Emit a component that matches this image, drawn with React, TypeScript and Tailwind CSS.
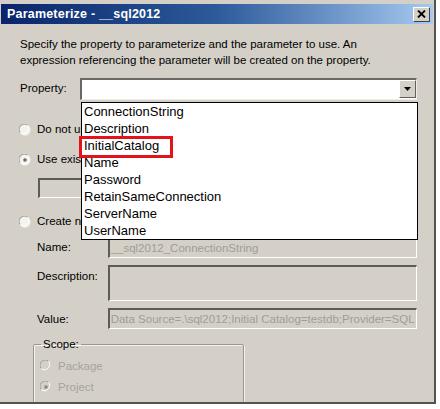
import React from 'react'

const font = { fontFamily: '"Liberation Sans", Arial, sans-serif' }

function Radio({ checked, disabled }: { checked?: boolean; disabled?: boolean }) {
  return (
    <svg width="12" height="12" viewBox="0 0 12 12" className="shrink-0">
      <circle cx="6" cy="6" r="5.5" fill={disabled ? '#d4d0c8' : '#f4f3ef'} />
      <path d="M1.2 8.5 A5.2 5.2 0 0 1 8.5 1.2" fill="none" stroke="#9a9790" strokeWidth="1" />
      <path d="M8.5 1.2 A5.2 5.2 0 0 1 1.2 8.5" fill="none" stroke="#ffffff" strokeWidth="1" />
      {checked && <circle cx="6" cy="6" r="1.8" fill={disabled ? '#8a8780' : '#6a6a6a'} />}
    </svg>
  )
}

function Field({ children, className }: { children?: React.ReactNode; className: string }) {
  return (
    <div
      className={`border-t-2 border-l-2 border-t-[#5e5c58] border-l-[#5e5c58] border-r border-b border-r-white border-b-white bg-[#d4d0c8] overflow-hidden whitespace-nowrap text-[11.5px] text-[#a09d96] pl-[1px] ${className}`}
    >
      {children}
    </div>
  )
}

// radio rows sit under the open list; their labels are clipped at its edge
function RadioRow({ label, checked, className }: { label: string; checked?: boolean; className: string }) {
  return (
    <div className={`flex items-center gap-[6px] h-[16px] -ml-[1px] text-[11.5px] ${className}`}>
      <Radio checked={checked} />
      <span className="w-[44px] overflow-hidden whitespace-nowrap">{label}</span>
    </div>
  )
}

const items = [
  'ConnectionString',
  'Description',
  'InitialCatalog',
  'Name',
  'Password',
  'RetainSameConnection',
  'ServerName',
  'UserName',
]

export default function App() {
  return (
    <div className="w-[440px] h-[409px] bg-white relative overflow-hidden" style={font}>
      {/* dialog window */}
      <div className="w-[436px] h-[404px] bg-[#d4d0c8] border-r-2 border-b-2 border-r-[#55534f] border-b-[#55534f] pt-[4px] pl-[1px] pr-[1px] flex flex-col overflow-hidden">
        {/* title bar */}
        <div className="h-[20px] bg-gradient-to-r from-[#0a246a] via-[#2d5a9a] to-[#a6caf0] flex items-center justify-between pl-[6px] pr-[3px] shrink-0">
          <span className="text-white font-bold text-[12.5px] tracking-[0.2px]">Parameterize - __sql2012</span>
          <div className="w-[17px] h-[15px] bg-[#d4d0c8] border-t border-l border-t-white border-l-white border-r border-b border-r-[#404040] border-b-[#404040] flex items-center justify-center">
            <svg width="9" height="8" viewBox="0 0 9 8">
              <path d="M1 0.5 L8 7.5 M8 0.5 L1 7.5" stroke="#000" strokeWidth="1.8" />
            </svg>
          </div>
        </div>

        {/* body */}
        <div className="pl-[19px] pr-[16px] flex flex-col text-black">
          <p className="mt-[12px] text-[11.5px] leading-[16px]">
            Specify the property to parameterize and the parameter to use. An
            <br />
            expression referencing the parameter will be created on the property.
          </p>

          <div className="mt-[10px] flex items-center h-[22px]">
            <span className="w-[60px] text-[11.5px]">Property:</span>
            <div className="w-[338px] h-[22px] bg-white border-t-2 border-l-2 border-t-[#6a6864] border-l-[#6a6864] border-r border-b border-r-[#eeede9] border-b-[#eeede9] flex justify-end">
              <div className="w-[17px] h-[18px] bg-[#d4d0c8] border-t border-l border-t-white border-l-white border-r border-b border-r-[#606060] border-b-[#606060] flex items-center justify-center">
                <svg width="7" height="4" viewBox="0 0 7 4">
                  <path d="M0 0 H7 L3.5 4 Z" fill="#000" />
                </svg>
              </div>
            </div>
          </div>

          <RadioRow className="mt-[22px]" label="Do not use parameter" />
          <RadioRow className="mt-[14px]" label="Use existing parameter" checked />

          <div className="mt-[10px] ml-[18px] w-[240px] h-[20px] bg-[#d4d0c8] border-t-2 border-l-2 border-t-[#5e5c58] border-l-[#5e5c58] border-r border-b border-r-white border-b-white" />

          <RadioRow className="mt-[16px]" label="Create new parameter" />

          <div className="mt-[7px] flex items-center ml-[17px]">
            <span className="w-[71px] text-[11.5px]">Name:</span>
            <Field className="w-[311px] h-[21px] leading-[19px]">__sql2012_ConnectionString</Field>
          </div>

          <div className="mt-[7px] flex items-start ml-[17px]">
            <span className="w-[71px] text-[11.5px] mt-[3px]">Description:</span>
            <Field className="w-[311px] h-[36px]" />
          </div>

          <div className="mt-[7px] flex items-center ml-[17px]">
            <span className="w-[71px] text-[11.5px] mt-[2px]">Value:</span>
            <Field className="w-[311px] h-[21px] leading-[19px]">
              Data Source=.\sql2012;Initial Catalog=testdb;Provider=SQL
            </Field>
          </div>

          <fieldset className="mt-[7px] ml-[13px] w-[211px] h-[70px] border border-[#9a9790] shadow-[inset_1px_1px_0_#f4f3ef,1px_1px_0_#f4f3ef] rounded-[2px] px-[6px] pb-0">
            <legend className="text-[11.5px] px-[2px] ml-[1px]">Scope:</legend>
            <div className="flex items-center gap-[6px] h-[16px] mt-[5px] text-[11.5px] text-[#a6a39c]">
              <Radio disabled />
              <span>Package</span>
            </div>
            <div className="flex items-center gap-[6px] h-[16px] mt-[5px] text-[11.5px] text-[#a6a39c]">
              <Radio checked disabled />
              <span>Project</span>
            </div>
          </fieldset>
        </div>
      </div>

      {/* open dropdown list */}
      <div className="absolute left-[81px] top-[102px] w-[337px] h-[138px] bg-white border border-black text-[13px]">
        {items.map((item) => (
          <div key={item} className="h-[17px] leading-[17px] pl-[2px] text-black">
            {item}
          </div>
        ))}
      </div>

      {/* highlight */}
      <div className="absolute left-[79px] top-[136px] w-[94px] h-[22px] border-[3px] border-[#e3121b]" />
    </div>
  )
}
